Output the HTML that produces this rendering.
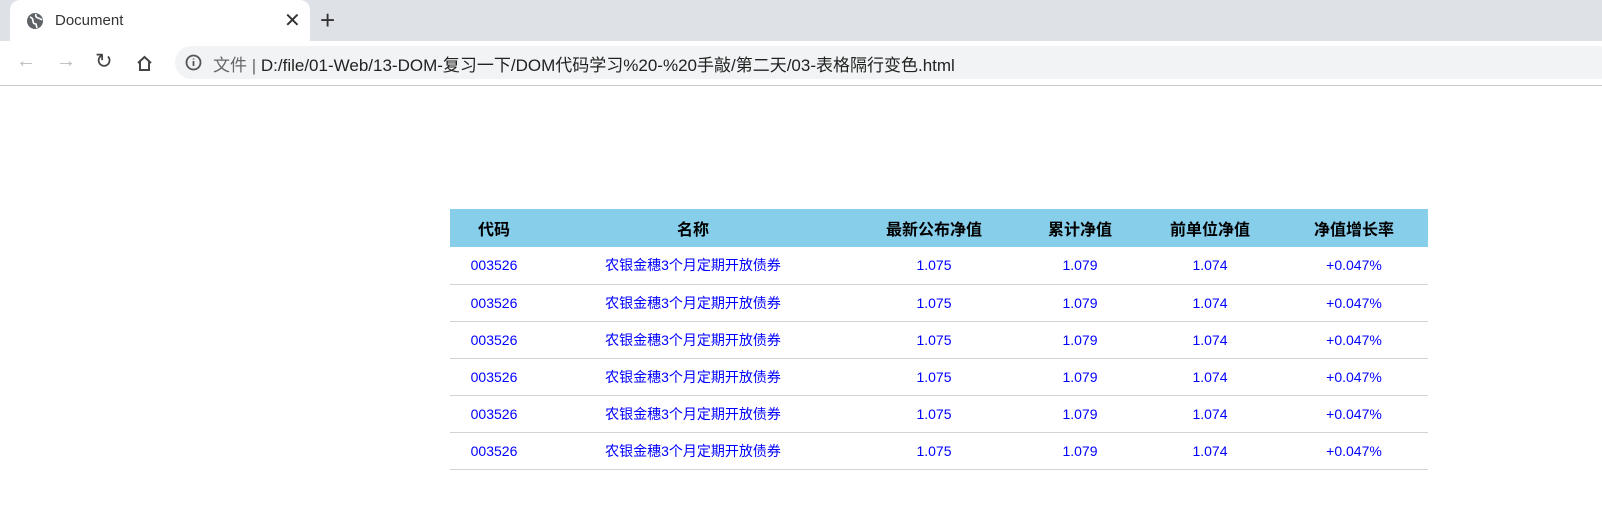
<!DOCTYPE html>
<html><head><meta charset="utf-8"><style>
*{margin:0;padding:0;box-sizing:border-box}
body{width:1602px;height:505px;background:#fff;font-family:"Liberation Sans","Noto Sans CJK SC",sans-serif;position:relative;overflow:hidden}
.tabbar{position:absolute;left:0;top:0;width:1602px;height:41px;background:#dee1e6}
.tab{position:absolute;left:10px;top:0;width:300px;height:42px;background:#fff;border-radius:10px 10px 0 0}
.tab .t{position:absolute;left:45px;top:12px;font-size:15px;color:#333}
.tab .x{position:absolute;left:274px;top:8px;font-size:20px;color:#333}
.plus{position:absolute;left:320px;top:5px;font-size:26px;color:#333}
.nav{position:absolute;left:0;top:41px;width:1602px;height:45px;background:#fff;border-bottom:1px solid #ccc}
.omni{position:absolute;left:175px;top:5px;width:1440px;height:33px;background:#f1f3f4;border-radius:17px}
.url{position:absolute;left:213px;top:10px;font-size:17px;color:#222;white-space:nowrap}
.url .g{color:#666}
table{position:absolute;left:450px;top:209px;width:978px;border-collapse:collapse;font-size:14px}
th{background:#87ceeb;height:38px;font-size:16px;font-weight:bold;color:#000;text-align:center}
td{height:37px;padding:0;border-bottom:1px solid #d3d3d3;color:#00f;text-align:center;box-sizing:border-box}
</style></head><body>
<div class="tabbar">
<div class="tab">
<svg style="position:absolute;left:16px;top:12px" width="18" height="18" viewBox="0 0 18 18"><circle cx="9" cy="9" r="8" fill="#5f6368"/><path d="M4 5q3 1 3 4t3 3l1 4M10 2q-1 3 2 4t4 2" stroke="#fff" stroke-width="1.6" fill="none"/></svg>
<span class="t">Document</span><span class="x">✕</span></div>
<span class="plus">+</span>
</div>
<div class="nav">
<span style="position:absolute;left:16px;top:9px;font-size:20px;color:#bbb">←</span>
<span style="position:absolute;left:56px;top:9px;font-size:20px;color:#bbb">→</span>
<span style="position:absolute;left:95px;top:8px;font-size:21px;color:#444">↻</span>
<svg style="position:absolute;left:136px;top:14px" width="17" height="17" viewBox="0 0 17 17"><path d="M2 8L8.5 2 15 8M4 7v8h9V7" stroke="#444" stroke-width="2" fill="none"/></svg>
<div class="omni"></div>
<svg style="position:absolute;left:185px;top:13px" width="17" height="17" viewBox="0 0 17 17"><circle cx="8.5" cy="8.5" r="7" stroke="#555" stroke-width="1.8" fill="none"/><path d="M8.5 7v5M8.5 4.5v1" stroke="#555" stroke-width="1.8"/></svg>
<div class="url"><span class="g">文件 | </span> D:/file/01-Web/13-DOM-复习一下/DOM代码学习%20-%20手敲/第二天/03-表格隔行变色.html</div>
</div>
<table>
<colgroup><col style="width:88px"><col style="width:310px"><col style="width:172px"><col style="width:120px"><col style="width:140px"><col style="width:148px"></colgroup>
<tr><th>代码</th><th>名称</th><th>最新公布净值</th><th>累计净值</th><th>前单位净值</th><th>净值增长率</th></tr>
<tr><td>003526</td><td>农银金穗3个月定期开放债券</td><td>1.075</td><td>1.079</td><td>1.074</td><td>+0.047%</td></tr>
<tr><td>003526</td><td>农银金穗3个月定期开放债券</td><td>1.075</td><td>1.079</td><td>1.074</td><td>+0.047%</td></tr>
<tr><td>003526</td><td>农银金穗3个月定期开放债券</td><td>1.075</td><td>1.079</td><td>1.074</td><td>+0.047%</td></tr>
<tr><td>003526</td><td>农银金穗3个月定期开放债券</td><td>1.075</td><td>1.079</td><td>1.074</td><td>+0.047%</td></tr>
<tr><td>003526</td><td>农银金穗3个月定期开放债券</td><td>1.075</td><td>1.079</td><td>1.074</td><td>+0.047%</td></tr>
<tr><td>003526</td><td>农银金穗3个月定期开放债券</td><td>1.075</td><td>1.079</td><td>1.074</td><td>+0.047%</td></tr>
</table>
</body></html>
